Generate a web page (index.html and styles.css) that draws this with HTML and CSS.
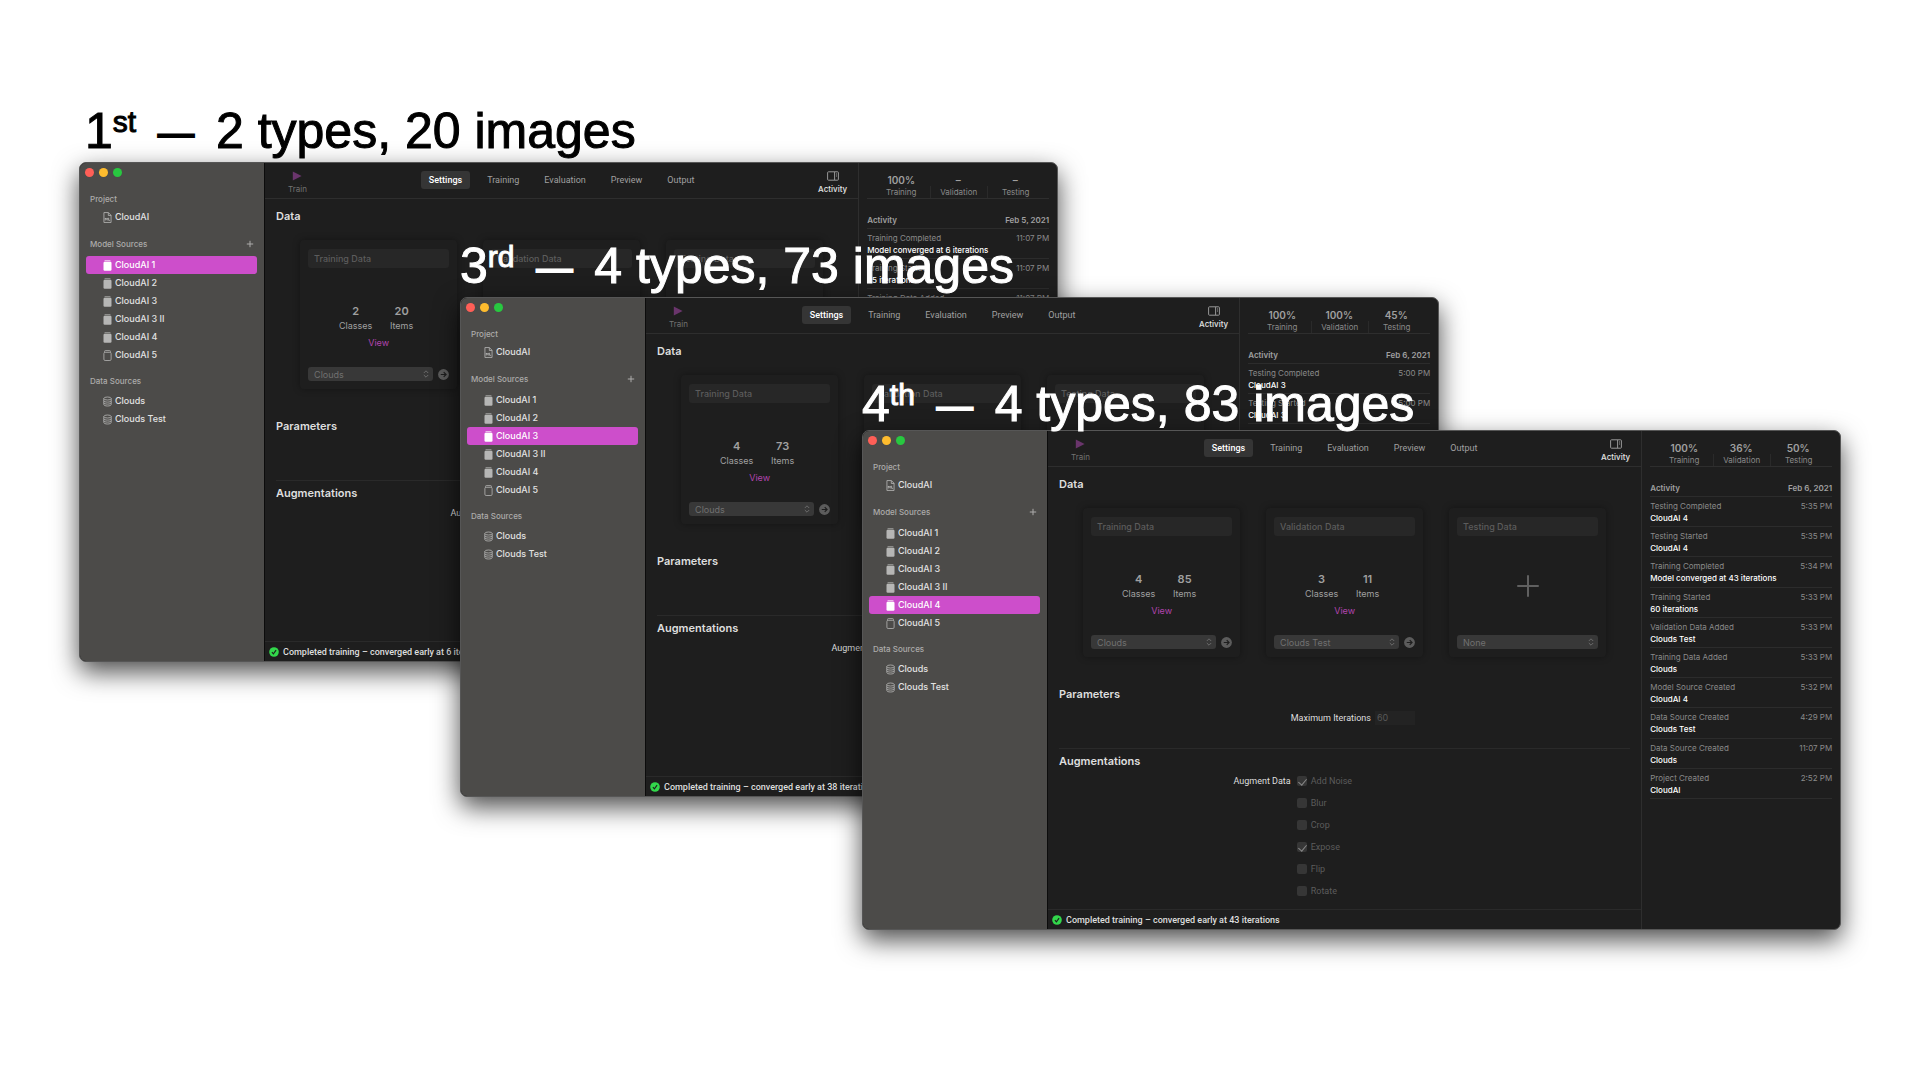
FILE: index.html
```html
<!DOCTYPE html>
<html lang="en">
<head>
<meta charset="utf-8">
<title>CloudAI training runs</title>
<link rel="stylesheet" href="styles.css">
</head>
<body>
<svg class="sprite" aria-hidden="true">
  <symbol id="i-doc" viewBox="0 0 9 12"><path d="M.6.6h4.9l2.9 3v7.8H.6zM5.4.8v3h3" fill="none" stroke="currentColor" stroke-width=".9"/><path d="M2 9.300V6.500l1.100 1.700 1.100-1.700v2.800M5.700 6.300v2.800h1.600" fill="none" stroke="currentColor" stroke-width=".9"/></symbol>
  <symbol id="i-model" viewBox="0 0 9 11"><path d="M2 .2h5q.6 0 .6.6v.5H1.400V.8Q1.400.2 2 .2z" fill="currentColor" opacity=".8"/><rect x=".5" y="1.800" width="8" height="9" rx="1.200" fill="currentColor"/></symbol>
  <symbol id="i-empty" viewBox="0 0 9 11"><path d="M1.600 2.200V1.300Q1.600.6 2.300.6h4.400q.7 0 .7.7v.9" fill="none" stroke="currentColor" stroke-width=".8"/><rect x=".9" y="2.300" width="7.200" height="8.200" rx="1.200" fill="none" stroke="currentColor" stroke-width=".8"/></symbol>
  <symbol id="i-data" viewBox="0 0 9 10"><g fill="none" stroke="currentColor" stroke-width=".8"><ellipse cx="4.500" cy="2" rx="3.700" ry="1.500"/><path d="M.8 2v6c0 .9 1.600 1.500 3.700 1.500S8.200 8.900 8.200 8V2M.8 4.200c0 .8 1.600 1.400 3.700 1.400s3.700-.6 3.700-1.400M.8 6.200c0 .8 1.600 1.400 3.700 1.400s3.700-.6 3.700-1.400"/></g></symbol>
  <symbol id="i-add" viewBox="0 0 8 8"><path d="M4 .8v6.400M.8 4h6.400" stroke="currentColor" stroke-width="1" fill="none"/></symbol>
  <symbol id="i-plus" viewBox="0 0 22 22"><path d="M11 1v20M1 11h20" stroke="currentColor" stroke-width="2" stroke-linecap="round" fill="none"/></symbol>
  <symbol id="i-play" viewBox="0 0 10 10"><path d="M.8.6 9.600 5 .8 9.400z" fill="currentColor"/></symbol>
  <symbol id="i-panel" viewBox="0 0 12 10"><rect x=".6" y=".8" width="10.800" height="8.400" rx=".8" fill="none" stroke="currentColor"/><path d="M7.600 1v8" stroke="currentColor" fill="none"/><path d="M9.500 2.500v1M9.500 4.500v1" stroke="currentColor" fill="none"/></symbol>
  <symbol id="i-go" viewBox="0 0 10 10"><circle cx="5" cy="5" r="4.900" fill="currentColor"/><path d="M2.500 5h4.700M5.200 2.900 7.300 5 5.200 7.100" fill="none" stroke="#1e1e1e" stroke-width="1.100"/></symbol>
  <symbol id="i-ok" viewBox="0 0 10 10"><circle cx="5" cy="5" r="4.800" fill="#32d74b"/><path d="m2.900 5.200 1.500 1.700 2.700-3.800" fill="none" stroke="#1e1e1e" stroke-width="1.100"/></symbol>
  <symbol id="i-updown" viewBox="0 0 6 8"><path d="M.8 3 3 .8 5.200 3M.8 5 3 7.200 5.200 5" fill="none" stroke="currentColor" stroke-width=".9"/></symbol>
</svg>

<main class="slide">

<section class="run run-first">
  <h2 class="caption">1<sup>st</sup> <span class="dash">—</span> 2 types, 20 images</h2>
  <article class="window">
    <aside class="sidebar">
      <div class="lights"><i class="close"></i><i class="mini"></i><i class="zoom"></i></div>
      <h3 class="group">Project</h3>
      <ul class="list list-project"><li><a href="#"><svg><use href="#i-doc"/></svg>CloudAI</a></li></ul>
      <h3 class="group">Model Sources<button class="add" aria-label="Add"><svg><use href="#i-add"/></svg></button></h3>
      <ul class="list list-models">
        <li><a href="#" class="selected"><svg><use href="#i-model"/></svg>CloudAI 1</a></li>
        <li><a href="#"><svg><use href="#i-model"/></svg>CloudAI 2</a></li>
        <li><a href="#"><svg><use href="#i-model"/></svg>CloudAI 3</a></li>
        <li><a href="#"><svg><use href="#i-model"/></svg>CloudAI 3 II</a></li>
        <li><a href="#"><svg><use href="#i-model"/></svg>CloudAI 4</a></li>
        <li><a href="#"><svg><use href="#i-empty"/></svg>CloudAI 5</a></li>
      </ul>
      <h3 class="group">Data Sources</h3>
      <ul class="list">
        <li><a href="#"><svg><use href="#i-data"/></svg>Clouds</a></li>
        <li><a href="#"><svg><use href="#i-data"/></svg>Clouds Test</a></li>
      </ul>
    </aside>
    <div class="content">
      <header class="toolbar">
        <button class="tool train"><svg><use href="#i-play"/></svg>Train</button>
        <nav class="tabs"><button class="current">Settings</button><button>Training</button><button>Evaluation</button><button>Preview</button><button>Output</button></nav>
        <button class="tool activity-toggle"><svg><use href="#i-panel"/></svg>Activity</button>
      </header>
      <div class="settings">
        <h3>Data</h3>
        <div class="cards">
          <section class="card">
            <h4>Training Data</h4>
            <div class="card-body"><dl class="counts"><div><dt>Classes</dt><dd>2</dd></div><div><dt>Items</dt><dd>20</dd></div></dl><a href="#">View</a></div>
            <div class="source"><span class="picker"><select aria-label="Training source" disabled><option>Clouds</option></select><svg><use href="#i-updown"/></svg></span><button aria-label="Show source"><svg><use href="#i-go"/></svg></button></div>
          </section>
          <section class="card">
            <h4>Validation Data</h4>
            <div class="card-body empty"><svg><use href="#i-plus"/></svg></div>
          </section>
          <section class="card">
            <h4>Testing Data</h4>
            <div class="card-body empty"><svg><use href="#i-plus"/></svg></div>
          </section>
        </div>
        <h3>Parameters</h3>
        <div class="parameters"></div>
        <hr>
        <h3>Augmentations</h3>
        <div class="augment"><span class="field-name">Augment Data</span></div>
      </div>
      <footer class="status"><svg><use href="#i-ok"/></svg>Completed training – converged early at 6 iterations</footer>
    </div>
    <aside class="activity">
      <dl class="scores"><div><dt>Training</dt><dd>100%</dd></div><div><dt>Validation</dt><dd>–</dd></div><div><dt>Testing</dt><dd>–</dd></div></dl>
      <h3 class="day"><span>Activity</span><time>Feb 5, 2021</time></h3>
      <ul class="log">
        <li><span>Training Completed</span><time>11:07 PM</time><strong>Model converged at 6 iterations</strong></li>
        <li><span>Training Started</span><time>11:07 PM</time><strong>25 iterations</strong></li>
        <li><span>Training Data Added</span><time>11:07 PM</time><strong>Clouds</strong></li>
      </ul>
    </aside>
  </article>
</section>

<section class="run run-third">
  <h2 class="caption">3<sup>rd</sup> <span class="dash">—</span> 4 types, 73 images</h2>
  <article class="window">
    <aside class="sidebar">
      <div class="lights"><i class="close"></i><i class="mini"></i><i class="zoom"></i></div>
      <h3 class="group">Project</h3>
      <ul class="list list-project"><li><a href="#"><svg><use href="#i-doc"/></svg>CloudAI</a></li></ul>
      <h3 class="group">Model Sources<button class="add" aria-label="Add"><svg><use href="#i-add"/></svg></button></h3>
      <ul class="list list-models">
        <li><a href="#"><svg><use href="#i-model"/></svg>CloudAI 1</a></li>
        <li><a href="#"><svg><use href="#i-model"/></svg>CloudAI 2</a></li>
        <li><a href="#" class="selected"><svg><use href="#i-model"/></svg>CloudAI 3</a></li>
        <li><a href="#"><svg><use href="#i-model"/></svg>CloudAI 3 II</a></li>
        <li><a href="#"><svg><use href="#i-model"/></svg>CloudAI 4</a></li>
        <li><a href="#"><svg><use href="#i-empty"/></svg>CloudAI 5</a></li>
      </ul>
      <h3 class="group">Data Sources</h3>
      <ul class="list">
        <li><a href="#"><svg><use href="#i-data"/></svg>Clouds</a></li>
        <li><a href="#"><svg><use href="#i-data"/></svg>Clouds Test</a></li>
      </ul>
    </aside>
    <div class="content">
      <header class="toolbar">
        <button class="tool train"><svg><use href="#i-play"/></svg>Train</button>
        <nav class="tabs"><button class="current">Settings</button><button>Training</button><button>Evaluation</button><button>Preview</button><button>Output</button></nav>
        <button class="tool activity-toggle"><svg><use href="#i-panel"/></svg>Activity</button>
      </header>
      <div class="settings">
        <h3>Data</h3>
        <div class="cards">
          <section class="card">
            <h4>Training Data</h4>
            <div class="card-body"><dl class="counts"><div><dt>Classes</dt><dd>4</dd></div><div><dt>Items</dt><dd>73</dd></div></dl><a href="#">View</a></div>
            <div class="source"><span class="picker"><select aria-label="Training source" disabled><option>Clouds</option></select><svg><use href="#i-updown"/></svg></span><button aria-label="Show source"><svg><use href="#i-go"/></svg></button></div>
          </section>
          <section class="card">
            <h4>Validation Data</h4>
            <div class="card-body empty"><svg><use href="#i-plus"/></svg></div>
          </section>
          <section class="card">
            <h4>Testing Data</h4>
            <div class="card-body empty"><svg><use href="#i-plus"/></svg></div>
          </section>
        </div>
        <h3>Parameters</h3>
        <div class="parameters"></div>
        <hr>
        <h3>Augmentations</h3>
        <div class="augment"><span class="field-name">Augment Data</span></div>
      </div>
      <footer class="status"><svg><use href="#i-ok"/></svg>Completed training – converged early at 38 iterations</footer>
    </div>
    <aside class="activity">
      <dl class="scores"><div><dt>Training</dt><dd>100%</dd></div><div><dt>Validation</dt><dd>100%</dd></div><div><dt>Testing</dt><dd>45%</dd></div></dl>
      <h3 class="day"><span>Activity</span><time>Feb 6, 2021</time></h3>
      <ul class="log">
        <li><span>Testing Completed</span><time>5:00 PM</time><strong>CloudAI 3</strong></li>
        <li><span>Testing Started</span><time>5:00 PM</time><strong>CloudAI 3</strong></li>
      </ul>
    </aside>
  </article>
</section>

<section class="run run-fourth">
  <h2 class="caption">4<sup>th</sup> <span class="dash">—</span> 4 types, 83 images</h2>
  <article class="window">
    <aside class="sidebar">
      <div class="lights"><i class="close"></i><i class="mini"></i><i class="zoom"></i></div>
      <h3 class="group">Project</h3>
      <ul class="list list-project"><li><a href="#"><svg><use href="#i-doc"/></svg>CloudAI</a></li></ul>
      <h3 class="group">Model Sources<button class="add" aria-label="Add"><svg><use href="#i-add"/></svg></button></h3>
      <ul class="list list-models">
        <li><a href="#"><svg><use href="#i-model"/></svg>CloudAI 1</a></li>
        <li><a href="#"><svg><use href="#i-model"/></svg>CloudAI 2</a></li>
        <li><a href="#"><svg><use href="#i-model"/></svg>CloudAI 3</a></li>
        <li><a href="#"><svg><use href="#i-model"/></svg>CloudAI 3 II</a></li>
        <li><a href="#" class="selected"><svg><use href="#i-model"/></svg>CloudAI 4</a></li>
        <li><a href="#"><svg><use href="#i-empty"/></svg>CloudAI 5</a></li>
      </ul>
      <h3 class="group">Data Sources</h3>
      <ul class="list">
        <li><a href="#"><svg><use href="#i-data"/></svg>Clouds</a></li>
        <li><a href="#"><svg><use href="#i-data"/></svg>Clouds Test</a></li>
      </ul>
    </aside>
    <div class="content">
      <header class="toolbar">
        <button class="tool train"><svg><use href="#i-play"/></svg>Train</button>
        <nav class="tabs"><button class="current">Settings</button><button>Training</button><button>Evaluation</button><button>Preview</button><button>Output</button></nav>
        <button class="tool activity-toggle"><svg><use href="#i-panel"/></svg>Activity</button>
      </header>
      <div class="settings">
        <h3>Data</h3>
        <div class="cards">
          <section class="card">
            <h4>Training Data</h4>
            <div class="card-body"><dl class="counts"><div><dt>Classes</dt><dd>4</dd></div><div><dt>Items</dt><dd>85</dd></div></dl><a href="#">View</a></div>
            <div class="source"><span class="picker"><select aria-label="Training source" disabled><option>Clouds</option></select><svg><use href="#i-updown"/></svg></span><button aria-label="Show source"><svg><use href="#i-go"/></svg></button></div>
          </section>
          <section class="card">
            <h4>Validation Data</h4>
            <div class="card-body"><dl class="counts"><div><dt>Classes</dt><dd>3</dd></div><div><dt>Items</dt><dd>11</dd></div></dl><a href="#">View</a></div>
            <div class="source"><span class="picker"><select aria-label="Validation source" disabled><option>Clouds Test</option></select><svg><use href="#i-updown"/></svg></span><button aria-label="Show source"><svg><use href="#i-go"/></svg></button></div>
          </section>
          <section class="card">
            <h4>Testing Data</h4>
            <div class="card-body empty"><svg><use href="#i-plus"/></svg></div>
            <div class="source"><span class="picker"><select aria-label="Testing source" disabled><option>None</option></select><svg><use href="#i-updown"/></svg></span></div>
          </section>
        </div>
        <h3>Parameters</h3>
        <div class="parameters"><label class="field-name" for="iterations">Maximum Iterations</label><input id="iterations" type="text" value="60" disabled></div>
        <hr>
        <h3>Augmentations</h3>
        <div class="augment">
          <span class="field-name">Augment Data</span>
          <div class="checks">
            <label><input type="checkbox" checked disabled>Add Noise</label>
            <label><input type="checkbox" disabled>Blur</label>
            <label><input type="checkbox" disabled>Crop</label>
            <label><input type="checkbox" checked disabled>Expose</label>
            <label><input type="checkbox" disabled>Flip</label>
            <label><input type="checkbox" disabled>Rotate</label>
          </div>
        </div>
      </div>
      <footer class="status"><svg><use href="#i-ok"/></svg>Completed training – converged early at 43 iterations</footer>
    </div>
    <aside class="activity">
      <dl class="scores"><div><dt>Training</dt><dd>100%</dd></div><div><dt>Validation</dt><dd>36%</dd></div><div><dt>Testing</dt><dd>50%</dd></div></dl>
      <h3 class="day"><span>Activity</span><time>Feb 6, 2021</time></h3>
      <ul class="log log-full">
        <li><span>Testing Completed</span><time>5:35 PM</time><strong>CloudAI 4</strong></li>
        <li><span>Testing Started</span><time>5:35 PM</time><strong>CloudAI 4</strong></li>
        <li><span>Training Completed</span><time>5:34 PM</time><strong>Model converged at 43 iterations</strong></li>
        <li><span>Training Started</span><time>5:33 PM</time><strong>60 iterations</strong></li>
        <li><span>Validation Data Added</span><time>5:33 PM</time><strong>Clouds Test</strong></li>
        <li><span>Training Data Added</span><time>5:33 PM</time><strong>Clouds</strong></li>
        <li><span>Model Source Created</span><time>5:32 PM</time><strong>CloudAI 4</strong></li>
        <li><span>Data Source Created</span><time>4:29 PM</time><strong>Clouds Test</strong></li>
        <li><span>Data Source Created</span><time>11:07 PM</time><strong>Clouds</strong></li>
        <li><span>Project Created</span><time>2:52 PM</time><strong>CloudAI</strong></li>
      </ul>
    </aside>
  </article>
</section>

</main>
</body>
</html>
```
FILE: styles.css
```css
* { box-sizing: border-box; }

body {
  margin: 0;
  background: #fff;
  font-family: Inter, "Liberation Sans", sans-serif;
  font-size: 9px;
}

h2, h3, h4, ul, dl, dd { margin: 0; padding: 0; }
ul { list-style: none; }
svg { display: block; flex: none; }
a { color: inherit; text-decoration: none; }
button { padding: 0; border: 0; background: none; color: inherit; font: inherit; }

.sprite { display: none; }

.slide {
  position: relative;
  min-height: 100vh;
  overflow: hidden;
}

/* Overlapping windows, each with its caption */
.run { position: absolute; width: 51%; }
.run-first { left: 79px; top: 101px; }
.run-third { left: 460px; top: 236px; }
.run-fourth { left: 862px; top: 374px; }

.caption {
  height: 61px;
  color: #fff;
  font: 400 50px/60px "Liberation Sans", Arial, sans-serif;
  -webkit-text-stroke: 1px currentColor;
  white-space: nowrap;
}
.run-first .caption { padding-left: 6px; color: #000; }
.run-fourth .caption { height: 56px; }
.caption sup {
  font-size: 30px;
  line-height: 0;
  vertical-align: 16px;
}
.dash {
  margin: 0 8px;
  font-size: 36px;
  line-height: 0;
  vertical-align: 3px;
  -webkit-text-stroke-width: 2px;
}

.window {
  display: flex;
  min-height: 500px;
  overflow: hidden;
  border: 1px solid #565656;
  border-radius: 7px;
  background: #1e1e1e;
  color: #a0a0a0;
  box-shadow: 0 10px 26px rgba(0, 0, 0, .7);
}

/* Sidebar */
.sidebar {
  flex: 0 0 185px;
  border-right: 1px solid #0c0c0c;
  background: #4c4b49;
}
.lights { display: flex; gap: 5px; padding: 5px 5px 16px; }
.lights i { width: 9px; height: 9px; border-radius: 50%; }
.close { background: #ff5f57; }
.mini { background: #febc2e; }
.zoom { background: #28c840; }

.group {
  display: flex;
  justify-content: space-between;
  padding: 0 10px;
  color: #acacab;
  font-size: 8px;
  font-weight: 500;
  line-height: 12px;
}
.add { display: flex; align-items: center; height: 12px; }
.add svg { width: 8px; height: 8px; }

.list { padding: 5px 7px 11px 6px; }
.list-project { padding-top: 3px; padding-bottom: 12px; }
.list-models { padding-top: 6px; }
.list a {
  display: flex;
  align-items: center;
  gap: 3px;
  padding-left: 17px;
  border-radius: 3px;
  color: #e2e2e2;
  font-weight: 500;
  line-height: 18px;
}
.list svg { width: 9px; height: 11px; color: #b6b6b5; }
.list .selected { background: #cd4ecb; color: #fff; }
.list .selected svg { color: #fff; }

/* Main pane */
.content { display: flex; flex: 1; flex-direction: column; min-width: 0; }

.toolbar {
  display: grid;
  grid-template-columns: 1fr auto 1fr;
  height: 36px;
  padding: 0 11px;
  border-bottom: 1px solid #2e2e2e;
}
.tool {
  display: flex;
  flex-direction: column;
  align-items: center;
  gap: 2px;
  padding-top: 8px;
  font-size: 8px;
  line-height: 12px;
}
.train { justify-self: start; padding-left: 12px; color: #717171; }
.train svg { width: 10px; height: 10px; color: #6a356c; }
.activity-toggle { justify-self: end; color: #e4e4e4; font-weight: 500; }
.activity-toggle svg { width: 12px; height: 10px; color: #979797; }

.tabs, .field-name, .checks, .status { font-family: Roboto, "Liberation Sans", sans-serif; }

.tabs { display: flex; gap: 9px; padding-top: 8px; }
.tabs button { height: 18px; padding: 0 8px; border-radius: 3px; }
.tabs .current { background: #353535; color: #fff; font-weight: 500; }

.settings { flex: 1; padding: 9px 11px 0; }
.settings h3 { color: #dedede; font-size: 11px; font-weight: 600; line-height: 16px; }

.cards { display: flex; justify-content: center; gap: 26px; margin: 16px 0 29px; }
.card {
  display: flex;
  flex: 0 1 157px;
  flex-direction: column;
  height: 149px;
  padding: 9px 8px 8px;
  border-radius: 4px;
  background: #1e1e1e;
  box-shadow: 0 0 7px rgba(0, 0, 0, .35);
}
.card h4 {
  padding: 0 6px;
  border-radius: 3px;
  background: #272727;
  color: #5c5c5c;
  font-size: 9px;
  font-weight: 500;
  line-height: 19px;
}
.card-body {
  display: flex;
  flex: 1;
  flex-direction: column;
  align-items: center;
  padding-top: 35px;
}
.card-body a { padding-top: 3px; color: #b144ae; line-height: 14px; }
.empty { justify-content: center; padding: 0; }
.empty svg { width: 22px; height: 22px; color: #606060; }

.counts { display: flex; }
.counts div { display: flex; flex-direction: column-reverse; width: 46px; text-align: center; }
.counts dt { line-height: 14px; }
.counts dd { font-size: 11px; font-weight: 600; line-height: 16px; }

.source { display: flex; align-items: center; gap: 5px; }
.source svg { width: 11px; height: 11px; color: #5c5c5c; }
.picker { position: relative; display: flex; flex: 1; align-items: center; }
.picker svg { position: absolute; right: 4px; width: 6px; height: 8px; color: #707070; }
.picker select {
  width: 100%;
  height: 14px;
  padding: 0 6px;
  border: 0;
  border-radius: 3px;
  appearance: none;
  background: #383838;
  color: #707070;
  font: inherit;
  opacity: 1;
}

.field-name { color: #dedede; text-align: right; }
.parameters {
  display: grid;
  grid-template-columns: 55fr 45fr;
  gap: 4px;
  height: 46px;
  padding-top: 9px;
  line-height: 14px;
}
.parameters input {
  width: 40px;
  height: 14px;
  padding: 0 2px;
  border: 0;
  background: #232323;
  color: #585858;
  font: inherit;
}
.settings hr { height: 1px; margin: 0 0 4px; border: 0; background: #2a2a2a; }

.augment {
  display: grid;
  grid-template-columns: 41fr 59fr;
  gap: 6px;
  padding-top: 1px;
  line-height: 22px;
}
.checks label { display: flex; align-items: center; gap: 4px; color: #5c5c5c; }
.checks input {
  position: relative;
  width: 10px;
  height: 10px;
  margin: 0;
  border-radius: 2px;
  appearance: none;
  background: #363636;
}
.checks input:checked::after {
  content: "";
  position: absolute;
  left: 3px;
  top: 1px;
  width: 4px;
  height: 7px;
  border: solid #888;
  border-width: 0 1px 1px 0;
  transform: rotate(40deg);
}

.status {
  display: flex;
  align-items: center;
  gap: 4px;
  height: 20px;
  padding-left: 4px;
  border-top: 1px solid #2a2a2a;
  color: #dedede;
  font-weight: 500;
}
.status svg { width: 10px; height: 10px; }

/* Activity panel */
.activity {
  flex: 0 0 199px;
  padding: 0 8px;
  border-left: 1px solid #2e2e2e;
  font-size: 8px;
  line-height: 12px;
}
.scores {
  display: flex;
  justify-content: center;
  height: 36px;
  padding-top: 11px;
  border-bottom: 1px solid #2e2e2e;
}
.scores div { display: flex; flex-direction: column-reverse; justify-content: flex-end; width: 57px; text-align: center; }
.scores dt { color: #8a8a8a; }
.scores div + div dt { border-left: 1px solid #2a2a2a; }
.scores dd { font-size: 10px; font-weight: 600; line-height: 12px; }

.day, .log li { display: flex; flex-wrap: wrap; justify-content: space-between; border-bottom: 1px solid #2c2c2c; }
.day { height: 30px; padding-top: 15px; font-size: 8px; font-weight: 600; }
.log { display: grid; }
.log-full { min-height: 302px; }
.log li { min-height: 30px; padding-top: 3px; align-content: flex-start; color: #8a8a8a; }
.log strong { flex: 0 0 100%; color: #fff; font-weight: 500; }
```
